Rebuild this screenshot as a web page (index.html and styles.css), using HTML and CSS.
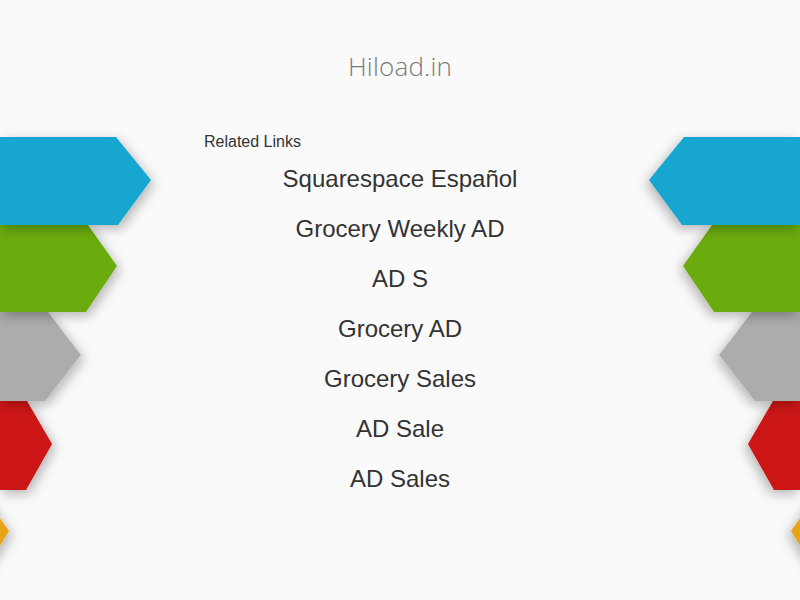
FILE: index.html
```html
<!DOCTYPE html>
<html lang="en">
<head>
<meta charset="utf-8">
<title>Hiload.in</title>
<link rel="stylesheet" href="styles.css">
</head>
<body>
<svg class="deco deco-left" width="200" height="600" viewBox="0 0 200 600" aria-hidden="true">
  <defs>
    <filter id="sh" x="-50%" y="-50%" width="200%" height="200%">
      <feDropShadow dx="3" dy="4" stdDeviation="6" flood-color="#000" flood-opacity="0.28"/>
    </filter>
  </defs>
  <polygon filter="url(#sh)" fill="#e6a414" points="-40,490 -20,490 9,531 -20,578 -40,578"/>
  <polygon filter="url(#sh)" fill="#cc1212" points="0,401 27,401 52,444 26,490 0,490"/>
  <polygon filter="url(#sh)" fill="#adacaa" points="0,312 48,312 81,355 45,401 0,401"/>
  <polygon filter="url(#sh)" fill="#6bab11" points="0,225 88,225 117,266 86,312 0,312"/>
  <polygon filter="url(#sh)" fill="#12a6d0" points="0,137 116,137 151,180 118,225 0,225"/>
</svg>
<svg class="deco deco-right" width="200" height="600" viewBox="0 0 200 600" aria-hidden="true">
  <polygon filter="url(#sh)" fill="#e6a414" points="-40,490 -20,490 9,531 -20,578 -40,578"/>
  <polygon filter="url(#sh)" fill="#cc1212" points="0,401 27,401 52,444 26,490 0,490"/>
  <polygon filter="url(#sh)" fill="#adacaa" points="0,312 48,312 81,355 45,401 0,401"/>
  <polygon filter="url(#sh)" fill="#6bab11" points="0,225 88,225 117,266 86,312 0,312"/>
  <polygon filter="url(#sh)" fill="#12a6d0" points="0,137 116,137 151,180 118,225 0,225"/>
</svg>
<main class="page">
  <h1 class="brand">Hiload.in</h1>
  <section class="links">
    <h2 class="links-title">Related Links</h2>
    <ul class="link-list">
      <li><a href="#">Squarespace Español</a></li>
      <li><a href="#">Grocery Weekly AD</a></li>
      <li><a href="#">AD S</a></li>
      <li><a href="#">Grocery AD</a></li>
      <li><a href="#">Grocery Sales</a></li>
      <li><a href="#">AD Sale</a></li>
      <li><a href="#">AD Sales</a></li>
    </ul>
  </section>
</main>
</body>
</html>
```
FILE: styles.css
```css
html, body {
  margin: 0;
  padding: 0;
  height: 100%;
  overflow: hidden;
}
body {
  background: #fafafa;
  font-family: "Liberation Sans", Arial, sans-serif;
  color: #333;
  position: relative;
}
.deco {
  position: absolute;
  top: 0;
  display: block;
}
.deco-left { left: 0; }
.deco-right { right: 0; transform: scaleX(-1); }
.page {
  display: flex;
  flex-direction: column;
  align-items: center;
}
.brand {
  margin: 0;
  padding-top: 46px;
  font-family: "Open Sans", sans-serif;
  font-weight: 300;
  font-size: 26px;
  line-height: 40px;
  color: #7a7a7a;
  letter-spacing: 0.2px;
}
.links {
  width: 394px;
  margin-top: 47px;
}
.links-title {
  margin: 0;
  padding-left: 1px;
  font-size: 16px;
  font-weight: 400;
  line-height: 18px;
  color: #333;
}
.link-list {
  list-style: none;
  margin: 3px 0 0;
  padding: 0;
  text-align: center;
}
.link-list li {
  font-size: 24px;
  line-height: 50px;
}
.link-list a {
  color: #333;
  text-decoration: none;
}
```
